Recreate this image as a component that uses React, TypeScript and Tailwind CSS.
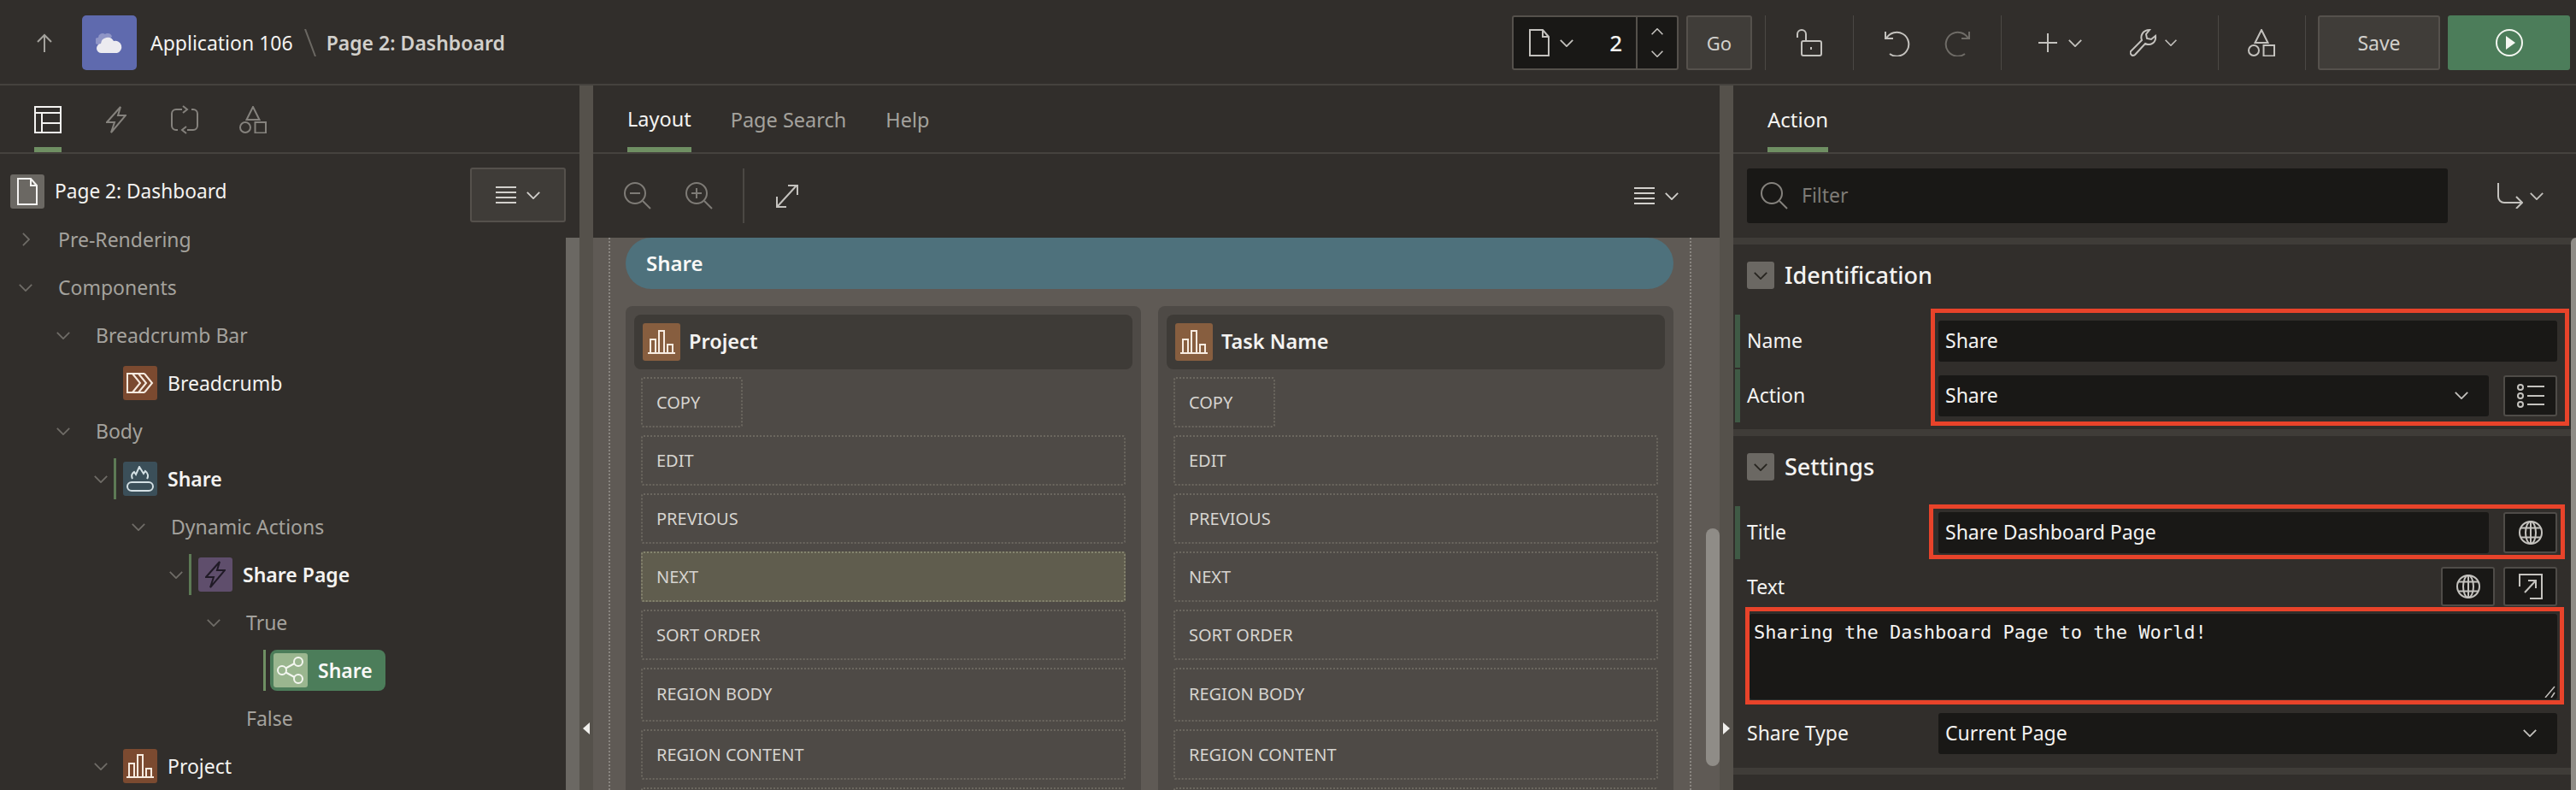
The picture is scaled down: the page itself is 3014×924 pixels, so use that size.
import type { ReactNode } from "react";

const sans = "font-['Noto_Sans','Open_Sans',sans-serif]";

interface IconProps {
  className?: string;
}

const Svg = ({ box, className, children }: { box: string; className?: string; children: ReactNode }) => (
  <svg viewBox={box} fill="none" stroke="currentColor" strokeWidth="2" className={`shrink-0 ${className ?? ""}`}>
    {children}
  </svg>
);

const Chevron = ({ className }: IconProps) => (
  <Svg box="0 0 18 10" className={className}>
    <path d="M1 1l8 8 8-8" />
  </Svg>
);

const ChevronRight = ({ className }: IconProps) => (
  <Svg box="0 0 10 18" className={className}>
    <path d="M1 1l8 8-8 8" />
  </Svg>
);

const Burger = ({ className }: IconProps) => (
  <Svg box="0 0 24 20" className={className}>
    <path d="M0 1h24M0 7h24M0 13h24M0 19h24" />
  </Svg>
);

const PageIcon = ({ className }: IconProps) => (
  <Svg box="0 0 24 32" className={className}>
    <path d="M1 1h15l7 8v22H1z" />
    <path d="M16 1v8h7" />
  </Svg>
);

const Shapes = ({ className }: IconProps) => (
  <Svg box="0 0 32 32" className={className}>
    <path d="M16 1l7.5 15h-15z" />
    <circle cx="7" cy="25" r="6" />
    <rect x="18.5" y="19" width="12.5" height="12.5" />
  </Svg>
);

const Globe = ({ className }: IconProps) => (
  <Svg box="0 0 28 28" className={className}>
    <circle cx="14" cy="14" r="13" />
    <ellipse cx="14" cy="14" rx="6" ry="13" />
    <path d="M14 1v26M2.5 8.5h23M2.5 19.5h23" />
  </Svg>
);

const Search = ({ className }: IconProps) => (
  <Svg box="0 0 32 32" className={className}>
    <circle cx="13" cy="13" r="12" />
    <path d="M22 22l9 9" />
  </Svg>
);

const Bars = ({ className }: IconProps) => (
  <Svg box="0 0 32 28" className={className}>
    <path d="M0 27h32M3 27V11h6v16M13 27V1h6v26M23 27V17h6v10" />
  </Svg>
);

const Bolt = ({ className }: IconProps) => (
  <Svg box="0 0 24 32" className={className}>
    <path d="M17 1L1 19h9L6 31l17-20h-9z" />
  </Svg>
);

const Cloud = () => (
  <svg viewBox="0 0 32 26" className="h-[26px] w-8">
    <path d="M3 15a4 4 0 0 1 0-8 5 5 0 0 1 8-4 5 5 0 0 1 8 3l-6 4-5 5z" fill="#8f95c6" />
    <path d="M7 25a5.500 5.500 0 0 1-1-11 8 8 0 0 1 15-3 7 7 0 0 1 4 14z" fill="#ecebf0" />
  </svg>
);

const treeChevron = "h-[9px] w-[18px] text-[#6f6c67]";

const TreeIcon = ({ bg, children }: { bg: string; children: ReactNode }) => (
  <div className={`flex h-10 w-10 shrink-0 items-center justify-center rounded-[3px] ${bg}`}>{children}</div>
);

// one line of the page tree, every level goes 44px further in
const TreeRow = ({
  level,
  open,
  closed,
  icon,
  bar,
  bold,
  label,
}: {
  level: number;
  open?: boolean;
  closed?: boolean;
  icon?: ReactNode;
  bar?: boolean;
  bold?: boolean;
  label: string;
}) => (
  <div className="flex h-14 items-center" style={{ paddingLeft: 12 + 44 * level }}>
    <div className="flex w-9 shrink-0 items-center justify-center">
      {open && <Chevron className={treeChevron} />}
      {closed && <ChevronRight className="h-[18px] w-[9px] text-[#6f6c67]" />}
    </div>
    {icon ? (
      <>
        <div className={`-ml-[3px] h-12 w-[3px] shrink-0 ${bar ? "bg-[#5d7a55]" : ""}`} />
        <div className="ml-2">{icon}</div>
        <span className={`ml-3 text-[23px] text-[#f4f3f1] ${bold ? "font-semibold" : ""}`}>{label}</span>
      </>
    ) : (
      <span className="ml-5 text-[23px] text-[#a4a29d]">{label}</span>
    )}
  </div>
);

const LeftPanel = () => (
  <div className="flex w-[678px] shrink-0 flex-col">
    <div className="flex h-[80px] shrink-0 items-start border-b-2 border-[#45423e] pl-10">
      <div className="flex h-[78px] w-8 items-center justify-center border-b-[6px] border-[#6f8f63] pt-2 text-[#f4f3f1]">
        <Svg box="0 0 32 32" className="h-8 w-8">
          <rect x="1" y="1" width="30" height="30" />
          <path d="M1 8h30M9 8v23M9 20h22" />
        </Svg>
      </div>
      <div className="ml-[52px] flex h-[78px] items-center pt-0.5 text-[#85827d]">
        <Bolt className="h-8 w-6" />
      </div>
      <div className="ml-[52px] flex h-[78px] items-center pt-0.5 text-[#85827d]">
        <Svg box="0 0 32 34" className="h-[34px] w-8">
          <path d="M13 5H6a5 5 0 0 0-5 5v14a5 5 0 0 0 5 5h2M19 29h7a5 5 0 0 0 5-5V10a5 5 0 0 0-5-5h-2" />
          <path d="M14 1l5 4-5 4M18 25l-5 4 5 4" />
        </Svg>
      </div>
      <div className="ml-12 flex h-[78px] items-center pt-0.5 text-[#85827d]">
        <Shapes className="h-8 w-8" />
      </div>
    </div>
    <div className="flex min-h-0 flex-1">
      <div className="relative min-w-0 flex-1 overflow-hidden pt-4">
        <div className="flex h-14 items-center pl-3">
          <div className="flex h-10 w-10 items-center justify-center rounded-[3px] bg-[#6b6863] text-[#f4f3f1]">
            <PageIcon className="h-8 w-6" />
          </div>
          <span className="ml-3 text-[22.700px] text-[#f4f3f1]">Page 2: Dashboard</span>
        </div>
        <TreeRow level={0} closed label="Pre-Rendering" />
        <TreeRow level={0} open label="Components" />
        <TreeRow level={1} open label="Breadcrumb Bar" />
        <TreeRow
          level={2}
          label="Breadcrumb"
          icon={
            <TreeIcon bg="bg-[#7b4a30]">
              <Svg box="0 0 32 24" className="h-6 w-8 text-[#f7ebe0]">
                <path d="M7 1H1v22h6M7 1l9 11-9 11M14 1l9 11-9 11M21 1l9 11-9 11M7 1h14M7 23h14" />
              </Svg>
            </TreeIcon>
          }
        />
        <TreeRow level={1} open label="Body" />
        <TreeRow
          level={2}
          open
          bar
          bold
          label="Share"
          icon={
            <TreeIcon bg="bg-[#3b4f59]">
              <Svg box="0 0 32 30" className="h-[30px] w-8 text-[#d4e0e4]">
                <rect x="1" y="19" width="30" height="10" rx="5" />
                <path d="M7 15c-2-4 0-7 2-8l2 3 4-9 5 8 2-3c3 2 4 6 2 9" />
              </Svg>
            </TreeIcon>
          }
        />
        <TreeRow level={3} open label="Dynamic Actions" />
        <TreeRow
          level={4}
          open
          bar
          bold
          label="Share Page"
          icon={
            <TreeIcon bg="bg-[#5f4e6c]">
              <Bolt className="h-8 w-6 text-[#201a26]" />
            </TreeIcon>
          }
        />
        <TreeRow level={5} open label="True" />
        <div className="flex h-14 items-center pl-[308px]">
          <div className="h-12 w-[3px] bg-[#6f8f63]" />
          <div className="ml-[5px] flex h-12 w-[135px] items-center rounded-lg bg-[#4c7d5a] pl-1">
            <TreeIcon bg="bg-[#9ab68f]">
              <Svg box="0 0 32 32" className="h-8 w-8 text-[#f4f7f1]">
                <circle cx="6" cy="16" r="5" />
                <circle cx="25" cy="6" r="5" />
                <circle cx="25" cy="26" r="5" />
                <path d="M10.500 13.500L20.500 8M10.500 18.500L20.500 24" />
              </Svg>
            </TreeIcon>
            <span className="ml-3 text-[23px] font-semibold text-[#f8f8f6]">Share</span>
          </div>
        </div>
        <TreeRow level={5} label="False" />
        <TreeRow
          level={2}
          open
          label="Project"
          icon={
            <TreeIcon bg="bg-[#7b4a30]">
              <Bars className="h-7 w-8 text-[#f7ebe0]" />
            </TreeIcon>
          }
        />
        <button className="absolute top-4 right-0 flex h-16 w-[112px] items-center justify-center gap-[11px] rounded-[3px] border-2 border-[#55514c] bg-[#3f3c38] text-[#d2d0cc]">
          <Burger className="h-5 w-6" />
          <Chevron className="h-[9px] w-[18px]" />
        </button>
      </div>
      <div className="flex w-4 shrink-0 flex-col">
        <div className="mt-[98px] flex-1 bg-[#6b6863]" />
      </div>
    </div>
  </div>
);

const Splitter = ({ dir }: { dir: "left" | "right" }) => (
  <div className="relative w-4 shrink-0 bg-[#55514b]">
    <div
      className={`absolute top-[745px] left-1 h-0 w-0 border-y-[7px] border-y-transparent ${
        dir === "left" ? "border-r-[8px] border-r-[#f0efec]" : "border-l-[8px] border-l-[#f0efec]"
      }`}
    />
  </div>
);

const slots = ["COPY", "EDIT", "PREVIOUS", "NEXT", "SORT ORDER", "REGION BODY", "REGION CONTENT", ""];

const Slot = ({ label, lit }: { label: string; lit?: boolean }) => (
  <div
    className={`flex items-center rounded-[3px] border-2 border-dotted pl-4 text-[20px] text-[#d6d4d0] ${
      label === "COPY" ? "w-[119px]" : "w-full"
    } ${label === "REGION BODY" ? "h-[63px] pb-0.5" : "h-[59px]"} ${
      lit ? "border-[#85846f] bg-[#605d4e]" : "border-[#6b675f]"
    }`}
  >
    {label}
  </div>
);

const RegionColumn = ({ title, litNext }: { title: string; litNext?: boolean }) => (
  <div className="flex-1 rounded-t-lg bg-[#4e4a46] px-2.5 pt-2.5">
    <div className="flex h-16 items-center rounded-lg bg-[#3e3b37] pl-2.5">
      <div className="flex h-11 w-11 items-center justify-center rounded-[3px] bg-[#875e3f]">
        <Bars className="h-7 w-8 text-[#f7ebe0]" />
      </div>
      <span className="ml-2.5 text-[23.500px] font-semibold text-[#f4f3f1]">{title}</span>
    </div>
    <div className="flex flex-col gap-[9px] px-2 pt-[9px]">
      {slots.map((s, i) => (
        <Slot key={i} label={s} lit={litNext && s === "NEXT"} />
      ))}
    </div>
  </div>
);

const CenterPanel = () => (
  <div className="flex w-[1318px] shrink-0 flex-col">
    <div className="flex h-[80px] shrink-0 items-start gap-[46px] border-b-2 border-[#45423e] pl-10 text-[23.500px] text-[#a4a29d]">
      <div className="flex h-[78px] items-center border-b-[6px] border-[#6f8f63] pt-2 text-[#f4f3f1]">Layout</div>
      <div className="flex h-[78px] items-center pt-1.5 pb-0.5">Page Search</div>
      <div className="flex h-[78px] items-center pt-1.5 pb-0.5">Help</div>
    </div>
    <div className="flex h-[98px] shrink-0 items-center pl-9 pr-[47px]">
      <Svg box="0 0 32 32" className="h-8 w-8 text-[#7e7b76]">
        <circle cx="13" cy="13" r="12" />
        <path d="M22 22l9 9M7 13h12" />
      </Svg>
      <Svg box="0 0 32 32" className="ml-10 h-8 w-8 text-[#7e7b76]">
        <circle cx="13" cy="13" r="12" />
        <path d="M22 22l9 9M7 13h12M13 7v12" />
      </Svg>
      <div className="ml-[35px] h-16 w-0.5 bg-[#4b4844]" />
      <Svg box="0 0 26 28" className="ml-[37px] h-7 w-[26px] text-[#c4c2be]">
        <path d="M2 26L24 2M14 2h11v11M1 15v12h11" />
      </Svg>
      <div className="ml-auto flex items-center gap-[11px] text-[#d2d0cc]">
        <Burger className="h-5 w-6" />
        <Chevron className="h-[9px] w-[18px]" />
      </div>
    </div>
    <div className="relative min-h-0 flex-1 overflow-hidden bg-[#5f5a55] pr-[33px] pl-[18px]">
      <div className="h-full border-x-2 border-dotted border-[#8a8681] pr-[19px] pl-[18px]">
        <div className="flex h-[60px] items-center rounded-full bg-[#4e717c] pl-6 text-[24px] font-semibold text-[#f8f8f6]">
          Share
        </div>
        <div className="mt-5 flex gap-5">
          <RegionColumn title="Project" litNext />
          <RegionColumn title="Task Name" />
        </div>
      </div>
      <div className="absolute top-[340px] right-0 h-[278px] w-4 rounded-full bg-[#8f8c87]" />
    </div>
  </div>
);

const Field = ({ children, className }: { children: ReactNode; className?: string }) => (
  <div className={`flex h-12 items-center rounded-[3px] bg-[#191816] px-2 pb-0.5 text-[23px] text-[#f4f3f1] ${className ?? ""}`}>
    {children}
  </div>
);

const FieldBtn = ({ children, tall }: { children: ReactNode; tall?: boolean }) => (
  <div
    className={`flex w-[63px] shrink-0 items-center justify-center rounded-[3px] border-2 border-[#4f4c48] bg-[#191816] text-[#c4c2be] ${
      tall ? "h-[46px]" : "h-12"
    }`}
  >
    {children}
  </div>
);

const SectionHead = ({ title }: { title: string }) => (
  <div className="flex h-8 items-center pl-4">
    <div className="flex h-8 w-8 items-center justify-center rounded-[3px] bg-[#6b6863] text-[#26241f]">
      <Chevron className="h-[9px] w-[18px]" />
    </div>
    <span className="ml-3 text-[27px] font-medium text-[#f4f3f1]">{title}</span>
  </div>
);

const PropRow = ({ label, children }: { label: string; children: ReactNode }) => (
  <div className="ml-0.5 flex h-[62px] items-center border-l-[6px] border-[#3f5a45] pl-2">
    <span className="w-[224px] shrink-0 pb-0.5 text-[23px] text-[#f4f3f1]">{label}</span>
    {children}
  </div>
);

const Redline = ({ className }: IconProps) => (
  <div className={`pointer-events-none absolute border-[5px] border-[#e8432a] ${className ?? ""}`} />
);

const RightPanel = () => (
  <div className="relative flex min-w-0 flex-1 flex-col">
    <div className="flex h-[80px] shrink-0 items-start border-b-2 border-[#45423e] pl-10 text-[24px]">
      <div className="flex h-[78px] items-center border-b-[6px] border-[#6f8f63] pt-2 text-[#f4f3f1]">Action</div>
    </div>
    <div className="flex h-[98px] shrink-0 items-center pl-4">
      <div className="flex h-16 w-[820px] items-center rounded-[3px] bg-[#191816] pl-4 text-[23px] text-[#7e7b76]">
        <Search className="h-8 w-8 text-[#85827d]" />
        <span className="ml-4 -translate-y-px">Filter</span>
      </div>
      <Svg box="0 0 30 30" className="ml-[58px] h-[30px] w-[30px] text-[#c4c2be]">
        <path d="M1 0v16a7 7 0 0 0 7 7h20M22 16l7 7-7 7" />
      </Svg>
      <Chevron className="ml-[7px] h-[9px] w-[18px] text-[#c4c2be]" />
    </div>
    <div className="h-2 shrink-0 bg-[#3f3c38]" />
    <div className="relative pt-5 pb-2">
      <SectionHead title="Identification" />
      <div className="mt-[30px]">
        <PropRow label="Name">
          <Field className="w-[724px]">Share</Field>
        </PropRow>
        <div className="mt-0.5">
          <PropRow label="Action">
            <Field className="w-[644px] justify-between pr-[23px]">
              Share
              <Chevron className="h-[9px] w-[18px] text-[#c4c2be]" />
            </Field>
            <div className="ml-[17px]">
              <FieldBtn>
                <Svg box="0 0 32 28" className="h-7 w-8">
                  <circle cx="4" cy="4" r="3" />
                  <circle cx="4" cy="14" r="3" />
                  <circle cx="4" cy="24" r="3" />
                  <path d="M12 3h20M12 14h20M12 24h20" />
                </Svg>
              </FieldBtn>
            </div>
          </PropRow>
        </div>
      </div>
      <Redline className="top-[75px] left-[231px] h-[137px] w-[747px]" />
    </div>
    <div className="h-2 shrink-0 bg-[#3f3c38]" />
    <div className="relative pt-5 pb-4">
      <SectionHead title="Settings" />
      <div className="mt-[30px]">
        <PropRow label="Title">
          <Field className="w-[644px]">Share Dashboard Page</Field>
          <div className="ml-[17px]">
            <FieldBtn>
              <Globe className="h-7 w-7" />
            </FieldBtn>
          </div>
        </PropRow>
      </div>
      <div className="mt-[9px] flex h-[46px] items-center gap-2.5 pr-[22px] pl-4">
        <span className="mr-auto text-[23px] text-[#f4f3f1]">Text</span>
        <FieldBtn tall>
          <Globe className="h-7 w-7" />
        </FieldBtn>
        <FieldBtn tall>
          <Svg box="0 0 28 30" className="h-[30px] w-7">
            <path d="M1 15V1h26v28H13" />
            <path d="M7 22L20 8M11 8h9v9" />
          </Svg>
        </FieldBtn>
      </div>
      <div className="relative mt-[9px] mr-[22px] ml-[19px] h-[100px] rounded-[3px] bg-[#191816] px-[5px] pt-[7px] font-['DejaVu_Sans_Mono',monospace] text-[22px] leading-[30px] text-[#f4f3f1]">
        Sharing the Dashboard Page to the World!
        <svg viewBox="0 0 14 14" className="absolute right-0.5 bottom-0.5 h-3.5 w-3.5 text-[#c4c2be]" stroke="currentColor" strokeWidth="1.500">
          <path d="M2 14L13 1M9 14L13 8" />
        </svg>
      </div>
      <div className="mt-4 flex items-center pr-[22px] pl-4">
        <span className="w-[224px] shrink-0 pb-0.5 text-[23px] text-[#f4f3f1]">Share Type</span>
        <Field className="flex-1 justify-between pr-[23px]">
          Current Page
          <Chevron className="h-[9px] w-[18px] text-[#c4c2be]" />
        </Field>
      </div>
      <Redline className="top-[80px] left-[229px] h-16 w-[744px]" />
      <Redline className="top-[200px] left-[14px] h-[114px] w-[958px]" />
    </div>
    <div className="h-2 shrink-0 bg-[#3f3c38]" />
    <div className="absolute top-[178px] right-0 bottom-0 w-1.5 rounded-tl-md bg-[#8f8c87]" />
  </div>
);

const Divider = ({ className }: IconProps) => <div className={`h-16 w-px bg-[#4b4844] ${className ?? ""}`} />;

const TopBar = () => (
  <div className="flex h-[100px] shrink-0 items-center border-b-2 border-[#45423e] pt-0.5 pr-[7px] text-[#c4c2be]">
    <Svg box="0 0 18 22" className="ml-[43px] h-[22px] w-[18px] text-[#a4a29d]">
      <path d="M9 22V2M1 10l8-8 8 8" />
    </Svg>
    <div className="ml-[35px] flex h-16 w-16 items-center justify-center rounded-[5px] bg-[#5f6aae]">
      <Cloud />
    </div>
    <span className="ml-4 text-[23px] text-[#f4f3f1]">Application 106</span>
    <Svg box="0 0 14 32" className="ml-[13px] h-8 w-3.5 text-[#6b6863]">
      <path d="M1 0l12 32" />
    </Svg>
    <span className="ml-3 text-[23px] font-semibold text-[#d2d0cc]">Page 2: Dashboard</span>

    <div className="ml-auto flex h-16 w-[195px] items-center rounded-[3px] border-2 border-[#55514c] bg-[#191816]">
      <PageIcon className="ml-[18px] h-8 w-6" />
      <Chevron className="ml-[11px] h-[9px] w-[18px]" />
      <span className="ml-auto text-[26px] font-medium text-[#f4f3f1]">2</span>
      <div className="ml-4 flex h-full w-[48px] flex-col items-center justify-center gap-[18px] border-l-2 border-[#55514c]">
        <Chevron className="h-2 w-4 rotate-180" />
        <Chevron className="h-2 w-4" />
      </div>
    </div>
    <div className="ml-[9px] flex h-16 w-[77px] items-center justify-center rounded-[3px] border-2 border-[#55514c] bg-[#403d39] text-[22px] text-[#d2d0cc]">
      Go
    </div>
    <Divider className="ml-[15px]" />
    <Svg box="0 0 30 32" className="ml-[36px] h-8 w-[30px]">
      <path d="M1 10V6a5 5 0 0 1 10 0v8" />
      <rect x="6" y="14" width="23" height="17" rx="2" />
      <path d="M17 21v3" />
    </Svg>
    <Divider className="ml-[36px]" />
    <Svg box="0 0 30 32" className="ml-[36px] h-8 w-[30px]">
      <path d="M1 3v8h9M2 11a14 14 0 1 1 4 18" />
    </Svg>
    <Svg box="0 0 30 32" className="ml-10 h-8 w-[30px] text-[#6f6c67]">
      <path d="M29 3v8h-9M28 11a14 14 0 1 0-4 18" />
    </Svg>
    <Divider className="ml-[36px]" />
    <Svg box="0 0 22 22" className="ml-[43px] h-[22px] w-[22px]">
      <path d="M11 0v22M0 11h22" />
    </Svg>
    <Chevron className="ml-3 h-[9px] w-[18px]" />
    <Svg box="0 0 32 32" className="ml-[55px] h-8 w-8">
      <path d="M3 31c-2-1-3-3-2-5l13-13c-2-5 1-12 9-12l-4 5 1 5 5 1 5-4c1 8-6 12-12 9L6 30c-1 1-2 1-3 1z" />
    </Svg>
    <Chevron className="ml-2 h-2 w-4" />
    <Divider className="ml-[47px]" />
    <Shapes className="ml-[34px] h-8 w-8" />
    <Divider className="ml-[35px]" />
    <div className="ml-3.5 flex h-16 w-[143px] items-center justify-center rounded-[3px] border-2 border-[#55514c] bg-[#403d39] text-[23px] text-[#d2d0cc]">
      Save
    </div>
    <div className="ml-[9px] flex h-16 w-[143px] items-center justify-center rounded-[3px] bg-[#4c7d5a]">
      <svg viewBox="0 0 32 32" className="h-8 w-8 text-[#f4f7f1]" fill="none" stroke="currentColor" strokeWidth="2">
        <circle cx="16" cy="16" r="15" />
        <path d="M12 8l11 8-11 8z" fill="currentColor" stroke="none" />
      </svg>
    </div>
  </div>
);

const App = () => (
  <div className={`flex h-[924px] w-[3014px] flex-col overflow-hidden bg-[#312e2b] ${sans}`}>
    <TopBar />
    <div className="flex min-h-0 flex-1">
      <LeftPanel />
      <Splitter dir="left" />
      <CenterPanel />
      <Splitter dir="right" />
      <RightPanel />
    </div>
  </div>
);

export default App;
